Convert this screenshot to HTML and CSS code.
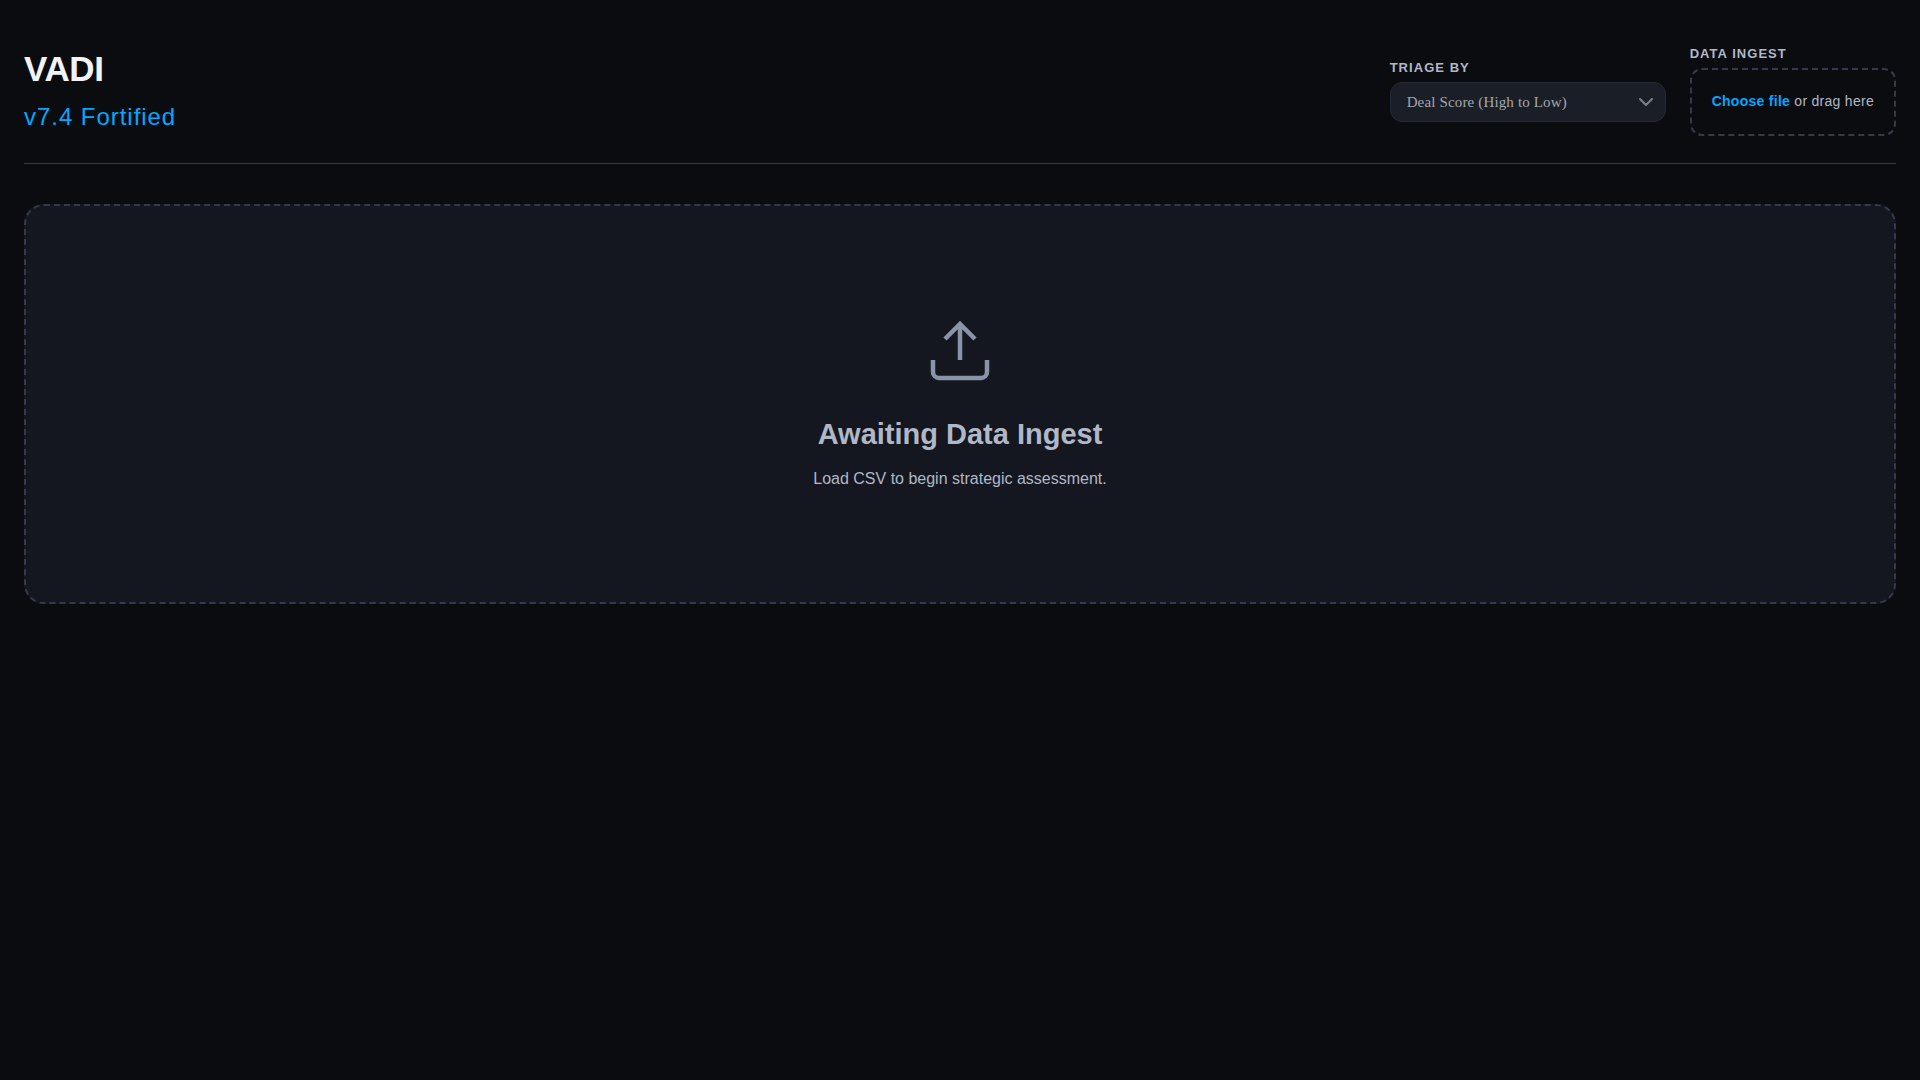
FILE: index.html
```html
<!DOCTYPE html>
<html lang="en">
<head>
<meta charset="utf-8">
<title>VADI v7.4 Fortified</title>
<link rel="stylesheet" href="styles.css">
</head>
<body>
<header class="header">
  <div class="brand">
    <h1 class="brand-name">VADI</h1>
    <p class="brand-version">v7.4 Fortified</p>
  </div>
  <div class="controls">
    <div class="control">
      <label class="control-label" for="triage">Triage by</label>
      <div class="select-wrap">
        <select class="select" id="triage">
          <option>Deal Score (High to Low)</option>
          <option>Deal Score (Low to High)</option>
        </select>
        <svg class="select-arrow" viewBox="0 0 14 8" aria-hidden="true"><path d="M1 1l6 6 6-6"/></svg>
      </div>
    </div>
    <div class="control">
      <span class="control-label" id="ingest-label">Data ingest</span>
      <button type="button" class="drop" aria-describedby="ingest-label"><strong class="drop-action">Choose file</strong> or drag here</button>
    </div>
  </div>
</header>
<main class="empty">
  <svg class="empty-icon" viewBox="0 0 24 24" aria-hidden="true"><path d="M21 15v4a2 2 0 0 1-2 2H5a2 2 0 0 1-2-2v-4M17 8l-5-5-5 5M12 3v12"/></svg>
  <h2 class="empty-title">Awaiting Data Ingest</h2>
  <p class="empty-text">Load CSV to begin strategic assessment.</p>
</main>
</body>
</html>
```

FILE: styles.css
```css
* { box-sizing: border-box; margin: 0; }

body {
  min-height: 100vh;
  padding: 40px 24px;
  background: #0b0c10;
  color: #b0b8c8;
  font-family: "Liberation Sans", Arial, sans-serif;
}

.header {
  display: flex;
  align-items: center;
  justify-content: space-between;
  padding: 3px 0 24px;
  margin-bottom: 40px;
  border-bottom: 1px solid #343a4a;
}

.brand { padding-bottom: 2px; }

.brand-name {
  margin-bottom: 2px;
  color: #f2f3f8;
  font-size: 35px;
  line-height: 52px;
  letter-spacing: -0.01em;
}

.brand-version {
  color: #00a8ff;
  font-size: 24px;
  line-height: 40px;
  letter-spacing: 0.04em;
}

.controls { display: flex; align-items: center; gap: 24px; }
.control { display: flex; flex-direction: column; gap: 6px; }

.control-label {
  font-size: 13px;
  font-weight: 700;
  line-height: 16px;
  letter-spacing: 0.08em;
  text-transform: uppercase;
}

.select-wrap { position: relative; }

.select {
  display: block;
  width: 276px;
  height: 40px;
  padding: 0 40px 0 16px;
  appearance: none;
  border: 1px solid #242936;
  border-radius: 12px;
  background: #1a1e27;
  color: #a5a7ac;
  font: 15px "Liberation Serif", "Times New Roman", serif;
  letter-spacing: 0.01em;
}

.select-arrow {
  position: absolute;
  top: 16px;
  right: 13px;
  width: 14px;
  height: 8px;
  pointer-events: none;
  fill: none;
  stroke: #7b7f8b;
  stroke-width: 2;
  stroke-linecap: round;
  stroke-linejoin: round;
}

.drop {
  height: 68px;
  padding: 0 20px 2px;
  border: 2px dashed #343a4a;
  border-radius: 12px;
  background: transparent;
  color: #b0b8c8;
  font: 14px "Liberation Sans", Arial, sans-serif;
  letter-spacing: 0.02em;
}

.drop-action { color: #00a8ff; }

.empty {
  display: flex;
  flex-direction: column;
  align-items: center;
  padding: 109px 24px;
  border: 2px dashed #343a4a;
  border-radius: 20px;
  background: #14171f;
  text-align: center;
}

.empty-icon {
  width: 72px;
  height: 72px;
  margin-bottom: 27px;
  fill: none;
  stroke: #8b93a7;
  stroke-width: 1.5;
}

.empty-title {
  margin-bottom: 11px;
  font-size: 29px;
  line-height: 40px;
}

.empty-text { font-size: 16px; line-height: 28px; }
```
